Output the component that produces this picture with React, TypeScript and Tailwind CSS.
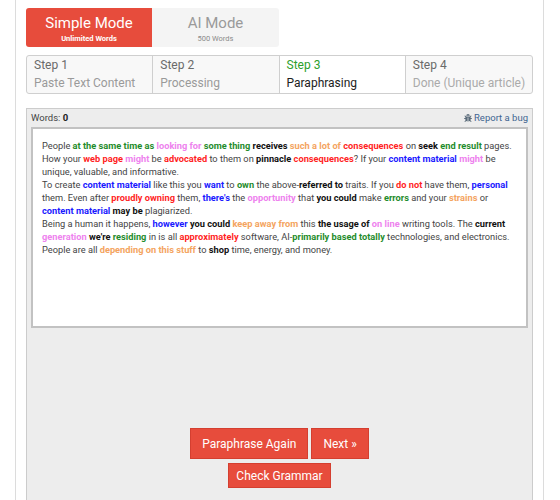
import React from "react";
import { FaBug } from "react-icons/fa";

type Seg = [string, string?];

const G = "g", V = "v", O = "o", R = "r", B = "b", K = "k";

const colorClass: Record<string, string> = {
  g: "font-bold text-[#1f8c2c]",
  v: "font-bold text-[#ee82ee]",
  o: "font-bold text-[#f4a460]",
  r: "font-bold text-[#ff1f1f]",
  b: "font-bold text-[#1a1aff]",
  k: "font-bold text-[#111]",
};

const lines: Seg[][] = [
  [["People "], ["at the same time as", G], [" "], ["looking for", V], [" "], ["some thing", G], [" "], ["receives", K], [" "], ["such a lot of", O], [" "], ["consequences", R], [" on "], ["seek", K], [" "], ["end result", G], [" pages."]],
  [["How your "], ["web page", R], [" "], ["might", V], [" be "], ["advocated", R], [" to them on "], ["pinnacle", K], [" "], ["consequences", R], ["? If your "], ["content material", B], [" "], ["might", V], [" be"]],
  [["unique, valuable, and informative."]],
  [["To create "], ["content material", B], [" like this you "], ["want", B], [" to "], ["own", G], [" the above-"], ["referred to", K], [" traits. If you "], ["do not", R], [" have them, "], ["personal", B]],
  [["them. Even after "], ["proudly owning", R], [" them, "], ["there's", B], [" the "], ["opportunity", V], [" that "], ["you could", K], [" make "], ["errors", G], [" and your "], ["strains", O], [" or"]],
  [["content material", B], [" "], ["may be", K], [" plagiarized."]],
  [["Being a human it happens, "], ["however", B], [" "], ["you could", K], [" "], ["keep away from", O], [" this "], ["the usage of", K], [" "], ["on line", V], [" writing tools. The "], ["current", K]],
  [["generation", V], [" "], ["we're", K], [" "], ["residing", G], [" in is all "], ["approximately", R], [" software, AI-"], ["primarily based totally", G], [" technologies, and electronics."]],
  [["People are all "], ["depending on this stuff", O], [" to "], ["shop", K], [" time, energy, and money."]],
];

export default function App() {
  return (
    <div className="w-[560px] h-[500px] bg-white overflow-hidden font-['Roboto',sans-serif]">
      <div className="ml-[15px] w-[529px] h-[500px] border-l border-r border-[#dcdcdc] px-[10px] pt-[8px]">
        {/* Mode tabs */}
        <div className="flex">
          <div className="w-[126px] h-[39px] bg-[#e74c3c] rounded-l-[3px] flex flex-col items-center pt-[5px] text-white">
            <div className="text-[15px] leading-[20px]">Simple Mode</div>
            <div className="text-[7.5px] leading-[12px] font-bold">Unlimited Words</div>
          </div>
          <div className="w-[127px] h-[39px] bg-[#f4f4f4] rounded-r-[3px] flex flex-col items-center pt-[5px]">
            <div className="text-[15px] leading-[20px] text-[#9a9a9a]">AI Mode</div>
            <div className="text-[7.5px] leading-[12px] text-[#8a8a8a]">500 Words</div>
          </div>
        </div>

        {/* Steps */}
        <div className="mt-[8px] h-[39px] w-[507px] border border-[#cfcfcf] rounded-[3px] bg-[#f8f8f8] grid grid-cols-4 overflow-hidden text-[12px] leading-[18px] whitespace-nowrap">
          <div className="px-[7px] border-r border-[#cfcfcf]">
            <div className="text-[#6a6a6a]">Step 1</div>
            <div className="text-[#9a9a9a]">Paste Text Content</div>
          </div>
          <div className="px-[7px] border-r border-[#cfcfcf]">
            <div className="text-[#6a6a6a]">Step 2</div>
            <div className="text-[#9a9a9a]">Processing</div>
          </div>
          <div className="px-[7px] border-r border-[#cfcfcf] bg-white">
            <div className="text-[#2ca02c]">Step 3</div>
            <div className="text-[#222]">Paraphrasing</div>
          </div>
          <div className="px-[7px]">
            <div className="text-[#6a6a6a]">Step 4</div>
            <div className="text-[#aaaaaa]">Done (Unique article)</div>
          </div>
        </div>

        {/* Panel */}
        <div className="mt-[14px] w-[507px] h-[420px] border border-[#cccccc] bg-[#ededed]">
          <div className="h-[18px] flex items-center justify-between px-[4px] text-[9.5px]">
            <div className="text-[#444]">
              Words: <span className="font-bold text-[#222]">0</span>
            </div>
            <div className="flex items-center gap-[2px] text-[#3f6591]">
              <FaBug className="w-[8px] h-[8px] text-[#5a6b7a]" />
              <span>Report a bug</span>
            </div>
          </div>
          <div className="mx-[4px] h-[201px] bg-white border-2 border-[#c2c2c2] pl-[9px] pt-[10px] text-[9.25px] leading-[13px] text-[#444]">
            {lines.map((line, i) => (
              <div key={i} className="whitespace-nowrap">
                {line.map(([t, c], j) =>
                  c ? (
                    <span key={j} className={colorClass[c]}>{t}</span>
                  ) : (
                    <span key={j}>{t}</span>
                  )
                )}
              </div>
            ))}
          </div>

          <div className="mt-[100px] flex flex-col items-center gap-[4px]">
            <div className="flex gap-[3px]">
              <button className="h-[31px] px-[11px] bg-[#e74c3c] border border-[#d43f30] text-white text-[12px]">
                Paraphrase Again
              </button>
              <button className="h-[31px] px-[11px] bg-[#e74c3c] border border-[#d43f30] text-white text-[12px]">
                Next »
              </button>
            </div>
            <button className="h-[25px] px-[7px] bg-[#e74c3c] border border-[#d43f30] text-white text-[12px]">
              Check Grammar
            </button>
          </div>
        </div>
      </div>
    </div>
  );
}
